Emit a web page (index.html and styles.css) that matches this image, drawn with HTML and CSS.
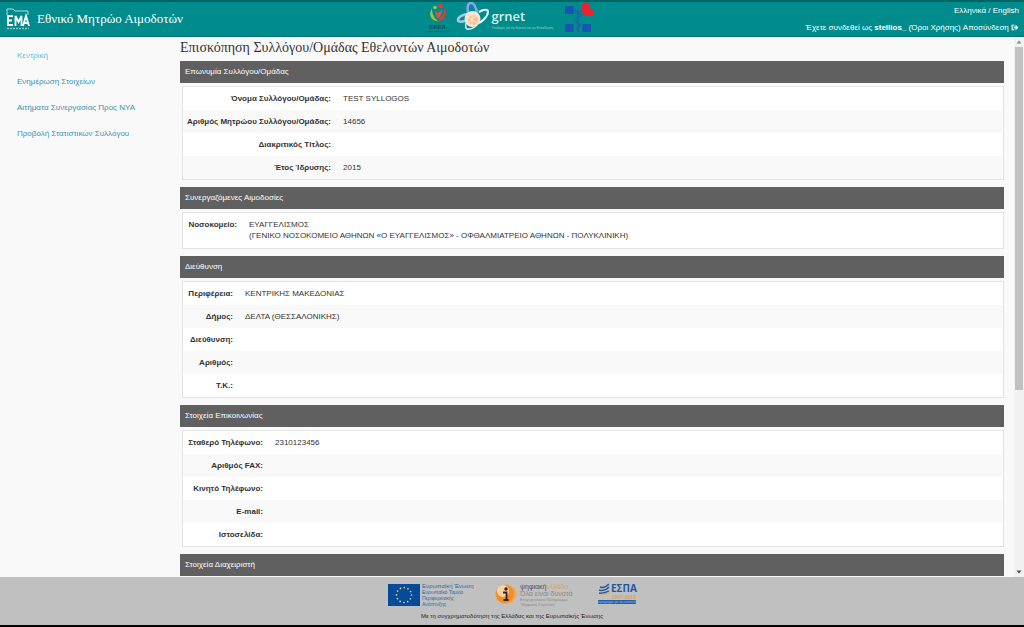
FILE: index.html
```html
<!DOCTYPE html>
<html lang="el">
<head>
<meta charset="utf-8">
<title>Εθνικό Μητρώο Αιμοδοτών</title>
<link rel="stylesheet" href="styles.css">
</head>
<body>
<header class="topbar">
  <div class="brand">
    <svg class="brand-logo" viewBox="0 0 24 24" role="img" aria-label="EMA">
      <path d="M1 8V2h6l2 2h13v4" fill="none" stroke="#b5dede" stroke-width="1"/>
      <path d="M7 9H2v9h5M2 13.500h4M9.500 19V9l3 6 3-6v10M17 19l3-10 3 10M18 16h4" fill="none" stroke="#fff" stroke-width="1.800"/>
      <path d="M1 21.500h22" stroke="#8fcaca" stroke-width="1.500" stroke-dasharray="2 1"/>
    </svg>
    <span class="brand-name">Εθνικό Μητρώο Αιμοδοτών</span>
  </div>
  <div class="partners">
    <div class="ekea">
      <svg class="ekea-mark" viewBox="0 0 18 20" aria-hidden="true">
        <circle cx="6" cy="5" r="1.800" fill="#a9c33a"/>
        <circle cx="11.500" cy="3.500" r="2.300" fill="#e23b35"/>
        <path d="M3 6c-4 6-1 12 6 13C5 15 3 12 3 6z" fill="#a9c33a"/>
        <path d="M15 5c4 7 0 13-6 14 1-4 7-6 6-14z" fill="#e23b35"/>
        <path d="M6 8c1 3 4 3 7-1 0 5-2 7-4 9-2-2-3-4-3-8z" fill="#d9534a"/>
      </svg>
      <span class="ekea-name">ΕΚΕΑ</span>
      <span class="ekea-line"></span>
    </div>
    <div class="grnet">
      <svg class="grnet-mark" viewBox="0 0 34 30" aria-hidden="true">
        <path d="M12 11C11 4 12 1 15 1c3 0 5 4 6 10" fill="none" stroke="#86a8ec" stroke-width="2.500"/>
        <path d="M13 12C7 12 2 15 2 18c0 2 3 2 7 1" fill="none" stroke="#a9c8ee" stroke-width="2.500"/>
        <path d="M23 10c5-3 9-3 9 0 0 4-5 9-9 11" fill="none" stroke="#e4f6fa" stroke-width="2.200"/>
        <path d="M10 21c-1 4 0 7 3 6 2 0 5-1 8-4" fill="none" stroke="#d6edf3" stroke-width="1.500"/>
        <circle cx="16.500" cy="17" r="8" fill="#f3e3cf"/>
        <circle cx="17" cy="18" r="5" fill="#f4c391"/>
        <path d="M10 14l13 8M11 22l11-10M16 9v16" stroke="#fff3e6" stroke-width=".7"/>
      </svg>
      <div class="grnet-text">
        <span class="grnet-name">grnet</span>
        <span class="grnet-tag">Υποδομές για την Έρευνα και την Εκπαίδευση</span>
      </div>
    </div>
    <svg class="health-mark" viewBox="0 0 30 31" aria-hidden="true">
      <path fill="#1556b0" d="M1 4h8.500v8H1zM1 22h8.500v8H1zM18.500 22H27v8h-8.500z"/>
      <path d="M14 6v24M11 11c6-1 8 2 4 4s-5 4-1 6 1 4-2 6M10 8l4 2 4-1" fill="none" stroke="#1c66a8" stroke-width="1.500"/>
      <path fill="#f0202f" d="M18 4c0-3 4-5 7-2l1 5c3-1 5 2 4 6l-10 1c-2-3-2-6-2-10z"/>
    </svg>
  </div>
  <div class="account">
    <div><a href="#">Ελληνικά</a> / <a href="#">English</a></div>
    <div class="session">Έχετε συνδεθεί ως <b>stellios_</b> (<a href="#">Όροι Χρήσης</a>) <a href="#">Αποσύνδεση
      <svg class="exit" viewBox="0 0 14 12" aria-hidden="true"><path d="M6 2H2v8h4" fill="none" stroke="#fff" stroke-width="2"/><path d="M5 4.500h3V1l5 5-5 5V7.500H5z" fill="#fff"/></svg></a></div>
  </div>
</header>

<div class="middle">
  <nav class="menu">
    <a class="current" href="#">Κεντρική</a>
    <a href="#">Ενημέρωση Στοιχείων</a>
    <a href="#">Αιτήματα Συνεργασίας Προς ΝΥΑ</a>
    <a href="#">Προβολή Στατιστικών Συλλόγου</a>
  </nav>
  <main class="content">
    <h1>Επισκόπηση Συλλόγου/Ομάδας Εθελοντών Αιμοδοτών</h1>

    <section>
      <h2>Επωνυμία Συλλόγου/Ομάδας</h2>
      <div class="panel"><table class="name-table">
        <tr><th scope="row">Όνομα Συλλόγου/Ομάδας:</th><td>TEST SYLLOGOS</td></tr>
        <tr><th scope="row">Αριθμός Μητρώου Συλλόγου/Ομάδας:</th><td>14656</td></tr>
        <tr><th scope="row">Διακριτικός Τίτλος:</th><td></td></tr>
        <tr><th scope="row">Έτος Ίδρυσης:</th><td>2015</td></tr>
      </table></div>
    </section>

    <section>
      <h2>Συνεργαζόμενες Αιμοδοσίες</h2>
      <div class="panel"><table class="hospital-table">
        <tr><th scope="row">Νοσοκομείο:</th><td>ΕΥΑΓΓΕΛΙΣΜΟΣ<br>(ΓΕΝΙΚΟ ΝΟΣΟΚΟΜΕΙΟ ΑΘΗΝΩΝ «Ο ΕΥΑΓΓΕΛΙΣΜΟΣ» - ΟΦΘΑΛΜΙΑΤΡΕΙΟ ΑΘΗΝΩΝ - ΠΟΛΥΚΛΙΝΙΚΗ)</td></tr>
      </table></div>
    </section>

    <section>
      <h2>Διεύθυνση</h2>
      <div class="panel"><table class="address-table">
        <tr><th scope="row">Περιφέρεια:</th><td>ΚΕΝΤΡΙΚΗΣ ΜΑΚΕΔΟΝΙΑΣ</td></tr>
        <tr><th scope="row">Δήμος:</th><td>ΔΕΛΤΑ (ΘΕΣΣΑΛΟΝΙΚΗΣ)</td></tr>
        <tr><th scope="row">Διεύθυνση:</th><td></td></tr>
        <tr><th scope="row">Αριθμός:</th><td></td></tr>
        <tr><th scope="row">Τ.Κ.:</th><td></td></tr>
      </table></div>
    </section>

    <section>
      <h2>Στοιχεία Επικοινωνίας</h2>
      <div class="panel"><table class="contact-table">
        <tr><th scope="row">Σταθερό Τηλέφωνο:</th><td>2310123456</td></tr>
        <tr><th scope="row">Αριθμός FAX:</th><td></td></tr>
        <tr><th scope="row">Κινητό Τηλέφωνο:</th><td></td></tr>
        <tr><th scope="row">E-mail:</th><td></td></tr>
        <tr><th scope="row">Ιστοσελίδα:</th><td></td></tr>
      </table></div>
    </section>

    <section>
      <h2>Στοιχεία Διαχειριστή</h2>
    </section>
  </main>
  <div class="scrollbar" aria-hidden="true">
    <svg class="arrow" viewBox="0 0 10 10"><path d="M2.500 6.500L5 3.500l2.500 3z" fill="#8a8a8a"/></svg>
    <div class="track"><div class="thumb"></div></div>
    <svg class="arrow" viewBox="0 0 10 10"><path d="M2.500 3.500L5 6.500l2.500-3z" fill="#505050"/></svg>
  </div>
</div>

<footer class="footer">
  <div class="funders">
    <div class="eu">
      <svg class="eu-flag" viewBox="0 0 32 22" aria-hidden="true">
        <path fill="#064a9c" d="M0 0h32v22H0z"/>
        <circle cx="16" cy="11" r="7.500" fill="none" stroke="#e6dc5a" stroke-width="1.700" stroke-linecap="round" stroke-dasharray="0 3.927"/>
      </svg>
      <div class="eu-text"><span class="eu-title">Ευρωπαϊκή Ένωση</span><span>Ευρωπαϊκό Ταμείο</span><span>Περιφερειακής</span><span>Ανάπτυξης</span></div>
    </div>
    <div class="digital">
      <svg class="digital-mark" viewBox="0 0 24 22" aria-hidden="true">
        <path d="M5 3l8-2 8 4 2 7-5 8-9 1-7-4-1-7z" fill="#eba75a"/>
        <ellipse cx="11" cy="11" rx="9" ry="9" fill="#f28d27"/>
        <ellipse cx="9" cy="8" rx="6" ry="6" fill="#fbd3a1"/>
        <circle cx="12" cy="6" r="1.700" fill="#2e2520"/>
        <path d="M9 9.500h3.500v7M9.500 17h5" fill="none" stroke="#2e2520" stroke-width="1.800"/>
      </svg>
      <div class="digital-text"><span class="digital-title">ψηφιακή<em>ελλάδα</em></span><span class="digital-motto">Όλα είναι δυνατά</span><span>Επιχειρησιακό Πρόγραμμα</span><span>"Ψηφιακή Σύγκλιση"</span></div>
    </div>
    <div class="espa">
      <div class="espa-top">
        <svg class="espa-mark" viewBox="0 0 12 12" aria-hidden="true"><path d="M2 4q4 2 9-3M1 7q5 2 10-3M1 10q5 1 10-2" fill="none" stroke="#235ba7" stroke-width="1.500"/><path d="M4 11q4 1 7-2" fill="none" stroke="#e8ad46" stroke-width="1.500"/></svg>
        <span class="espa-name">ΕΣΠΑ</span>
      </div>
      <span class="espa-years">2007-2013</span>
      <span class="espa-strip">πρόγραμμα για την ανάπτυξη</span>
    </div>
  </div>
  <p>Με τη συγχρηματοδότηση της Ελλάδας και της Ευρωπαϊκής Ένωσης</p>
</footer>
</body>
</html>
```
FILE: styles.css
```css
* { box-sizing: border-box; }
body {
  margin: 0;
  height: 100vh;
  display: flex;
  flex-direction: column;
  overflow: hidden;
  background: #f9f9f9;
  color: #333;
  font: 8px/12px "Liberation Sans", Arial, sans-serif;
}
a { color: inherit; text-decoration: none; }
svg { display: block; flex: none; }

.topbar {
  flex: none;
  display: grid;
  grid-template-columns: 1fr auto 1fr;
  height: 37px;
  padding: 0 5px 0 6px;
  border-top: 2px solid #006464;
  border-bottom: 1px solid #007474;
  background: #008c8c;
  color: #fff;
}
.brand { display: flex; align-items: center; gap: 7px; }
.brand-logo { width: 24px; height: 24px; }
.brand-name { font: 13px/18px "Liberation Serif", "Times New Roman", serif; white-space: nowrap; }
.partners { display: flex; align-items: flex-start; gap: 6px; padding-right: 6px; }
.ekea { display: flex; flex-direction: column; align-items: center; width: 24px; }
.ekea-mark { width: 18px; height: 21px; }
.ekea-name { color: #15474a; font-size: 6px; line-height: 8px; font-weight: bold; }
.ekea-line { width: 24px; height: 1px; background: #15696a; }
.grnet { display: flex; gap: 2px; }
.grnet-mark { width: 34px; height: 30px; }
.grnet-text { display: flex; flex-direction: column; width: 66px; padding-top: 7px; }
.grnet-name { font: 600 13px/15px "Open Sans", sans-serif; color: #d9f2f2; }
.grnet-tag { font-size: 3px; line-height: 8px; color: #9bd0d0; white-space: nowrap; }
.health-mark { width: 30px; height: 31px; }
.account { text-align: right; line-height: 17px; white-space: nowrap; }
.account b { font-weight: bold; }
.exit { display: inline-block; width: 8px; height: 7px; vertical-align: -1px; }

.middle { flex: 1; min-height: 0; display: flex; }
.menu {
  flex: none;
  width: 180px;
  padding: 13px 17px;
  display: flex;
  flex-direction: column;
  gap: 14px;
  color: #3a93b8;
  white-space: nowrap;
}
.menu .current { color: #62c0e2; }
.content { flex: 1; min-width: 0; overflow: hidden; padding-right: 10px; }
h1 { margin: 0; padding: 2px 0 4px; font: 14px/18px "Liberation Serif", "Times New Roman", serif; }
section { margin-bottom: 7px; }
h2 {
  margin: 0 0 3px;
  padding: 5px;
  background: #606060;
  color: #fff;
  font-size: 8px;
  line-height: 12px;
  font-weight: normal;
}
.panel { margin-left: 2px; border: 1px solid #e3e3e3; background: #fff; }
table { width: 100%; border-collapse: collapse; }
tr:nth-child(even) { background: #f9f9f9; }
th, td { height: 23px; padding: 6px; line-height: 11px; vertical-align: top; text-align: left; }
th { padding: 6px 0 6px 4px; text-align: right; white-space: nowrap; }
td { padding-left: 12px; }
.name-table th { width: 147px; }
.hospital-table th { width: 54px; }
.hospital-table td { padding-bottom: 7px; }
.address-table th { width: 50px; }
.contact-table th { width: 80px; }

.scrollbar { flex: none; width: 10px; display: flex; flex-direction: column; background: #f1f1f1; }
.arrow { width: 10px; height: 10px; }
.track { flex: 1; }
.thumb { height: 66%; margin: 0 1px; background: #c1c1c1; }

.footer {
  flex: none;
  height: 50px;
  padding-top: 6px;
  border-bottom: 2px solid #000;
  background: #c0c0c0;
  color: #222;
}
.funders { display: flex; justify-content: center; gap: 20px; height: 24px; }
.eu, .digital { display: flex; gap: 2px; white-space: nowrap; }
.eu-flag { width: 32px; height: 22px; margin-top: 1px; }
.eu-text { display: flex; flex-direction: column; width: 52px; color: #2e67a5; font-size: 5px; line-height: 6px; }
.eu-title { font-size: 6px; }
.digital-mark { width: 24px; height: 22px; }
.digital-text { display: flex; flex-direction: column; width: 58px; color: #8a8a8a; font-size: 4px; line-height: 5px; }
.digital-title { color: #5c5048; font-size: 7px; line-height: 7px; }
.digital-title em { color: #d9a566; font-style: normal; }
.digital-motto { font-size: 7px; line-height: 7px; }
.espa { width: 38px; white-space: nowrap; }
.espa-top { display: flex; gap: 1px; height: 12px; }
.espa-mark { width: 12px; height: 12px; }
.espa-name { color: #1f58a5; font: bold 10px/10px "Open Sans", sans-serif; }
.espa-years { display: block; padding-left: 14px; color: #dba449; font: bold 5px/5px "Liberation Sans", sans-serif; }
.espa-strip { display: block; height: 4px; overflow: hidden; background: #2460a9; color: #9bbbe0; font-size: 3px; line-height: 4px; }
.footer p { margin: 3px 0 0; text-align: center; font-size: 6px; line-height: 12px; }
```
